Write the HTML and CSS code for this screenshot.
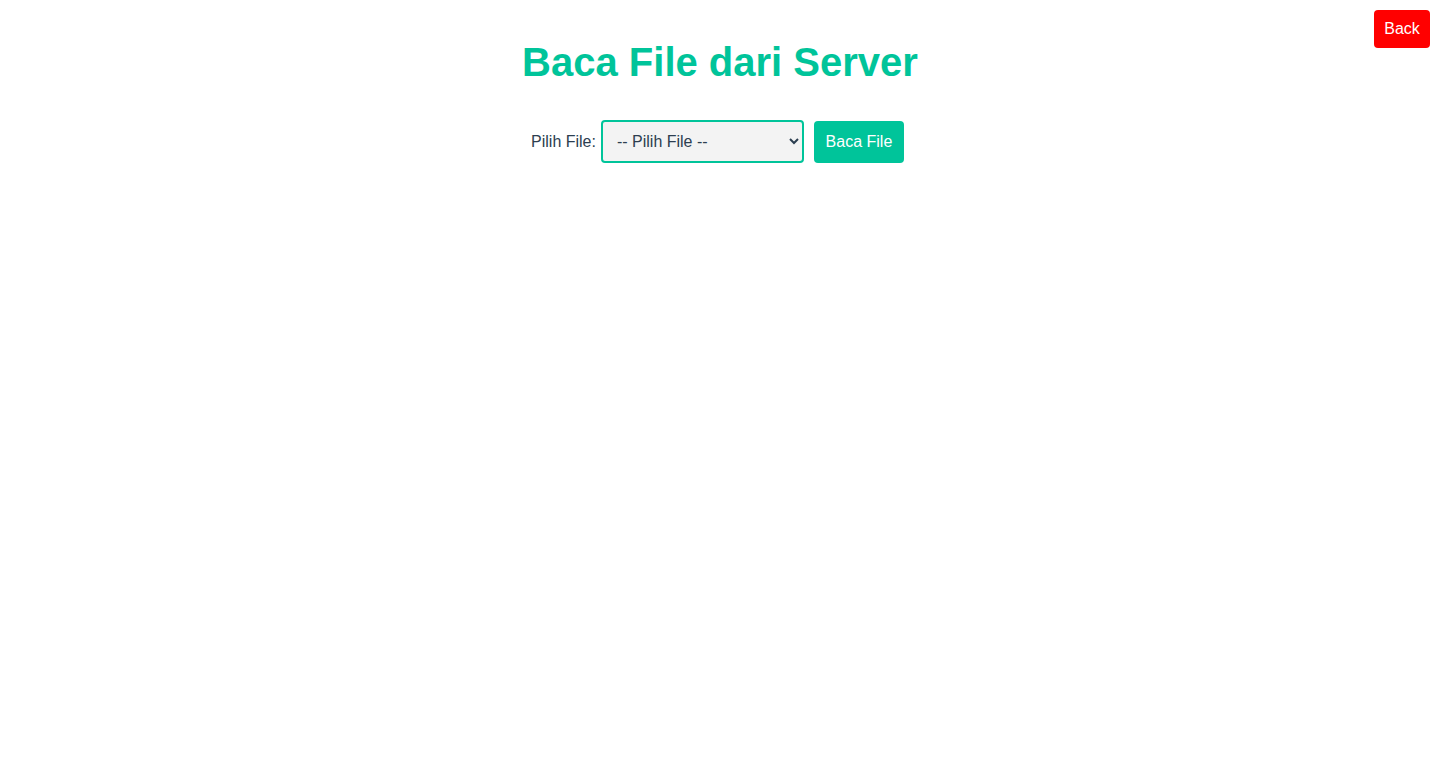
FILE: index.html
```html
<!DOCTYPE html>
<html lang="id">
<head>
<meta charset="utf-8">
<title>Baca File dari Server</title>
<link rel="stylesheet" href="styles.css">
</head>
<body>
<a class="back-btn" href="#">Back</a>
<main class="container">
  <h1 class="title">Baca File dari Server</h1>
  <form class="file-form">
    <label class="file-label" for="file">Pilih File:</label>
    <select class="file-select" id="file">
      <option>-- Pilih File --</option>
    </select>
    <button type="button" class="read-btn">Baca File</button>
  </form>
</main>
</body>
</html>
```
FILE: styles.css
```css
html, body {
  margin: 0;
  padding: 0;
  background: #ffffff;
}
body {
  font-family: "Liberation Sans", Arial, sans-serif;
  color: #2c3e50;
  font-size: 16px;
}
.back-btn {
  position: absolute;
  top: 10px;
  right: 10px;
  width: 56px;
  height: 38px;
  display: flex;
  align-items: center;
  justify-content: center;
  background: #ff0000;
  color: #ffffff;
  text-decoration: none;
  border-radius: 4px;
  font-size: 16px;
}
.container {
  display: flex;
  flex-direction: column;
  align-items: center;
  padding-top: 39px;
}
.title {
  margin: 0;
  font-size: 40px;
  line-height: 46px;
  font-weight: bold;
  color: #00c49a;
}
.file-form {
  display: flex;
  align-items: center;
  margin-top: 35px;
  margin-right: 5px;
}
.file-label {
  margin-right: 5px;
  color: #2c3e50;
}
.file-select {
  width: 203px;
  height: 43px;
  box-sizing: border-box;
  border: 2px solid #00c49a;
  border-radius: 4px;
  background: #f3f3f3;
  font-family: inherit;
  font-size: 16px;
  color: #2c3e50;
  padding: 0 10px;
}
.read-btn {
  margin-left: 10px;
  width: 90px;
  height: 42px;
  border: none;
  border-radius: 4px;
  background: #00c49a;
  color: #ffffff;
  font-family: inherit;
  font-size: 16px;
  padding: 0;
}
```
